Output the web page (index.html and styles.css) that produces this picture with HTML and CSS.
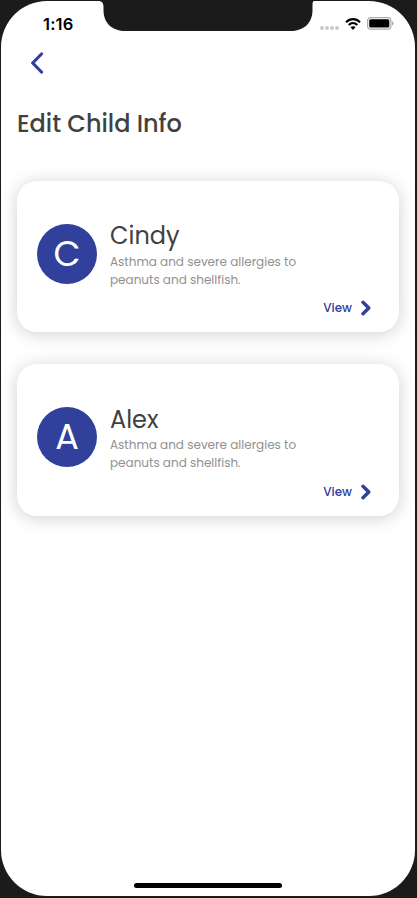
FILE: index.html
```
<!DOCTYPE html>
<html lang="en">
<head>
<meta charset="utf-8">
<title>Edit Child Info</title>
<link rel="stylesheet" href="styles.css">
</head>
<body>
<div class="screen">
  <svg class="notch" width="216" height="30" viewBox="0 0 216 30" aria-hidden="true"><path d="M0 0C4 0 5.500 2 5.500 6V9C5.500 22 14 30 28 30H192C206 30 214.500 22 214.500 9V6C214.500 2 214.500 0 216 0Z"/></svg>
  <header class="status">
    <span class="time">1:16</span>
    <div class="indicators">
      <svg class="signal" width="19" height="4" viewBox="0 0 19 4"><circle cx="2" cy="2" r="1.900"/><circle cx="7" cy="2" r="1.900"/><circle cx="12" cy="2" r="1.900"/><circle cx="17" cy="2" r="1.900"/></svg>
      <svg class="wifi" width="16" height="12" viewBox="0 0 16 12"><path class="arc" d="M1 4.200C5 .1 11 .1 15 4.200M3.700 7C6.200 4.500 9.800 4.500 12.300 7"/><path d="M5.400 9.100C7 7.800 9 7.800 10.600 9.100L8 11.900Z"/></svg>
      <svg class="battery" width="27" height="13" viewBox="0 0 27 13"><rect class="shell" x=".6" y=".6" width="23.300" height="11.600" rx="3"/><rect x="2.200" y="2.200" width="20.100" height="8.400" rx="1.500"/><path class="cap" d="M25 4.300C27 5 27 8 25 8.600Z"/></svg>
    </div>
  </header>
  <nav class="nav"><svg width="14" height="22" viewBox="0 0 14 22"><path class="stroke" d="M11.500 2L2.700 11L11.500 20"/></svg></nav>
  <main class="content">
    <h1 class="title">Edit Child Info</h1>
    <section class="card">
      <div class="child">
        <div class="avatar">C</div>
        <div class="info"><h2 class="name">Cindy</h2><p class="note">Asthma and severe allergies to<br>peanuts and shellfish.</p></div>
      </div>
      <div class="view"><span>View</span><svg width="10" height="16" viewBox="0 0 10 16"><path class="stroke bold" d="M2 2.200L7.800 8L2 13.800"/></svg></div>
    </section>
    <section class="card">
      <div class="child">
        <div class="avatar">A</div>
        <div class="info"><h2 class="name">Alex</h2><p class="note">Asthma and severe allergies to<br>peanuts and shellfish.</p></div>
      </div>
      <div class="view"><span>View</span><svg width="10" height="16" viewBox="0 0 10 16"><path class="stroke bold" d="M2 2.200L7.800 8L2 13.800"/></svg></div>
    </section>
  </main>
  <div class="home-bar"></div>
</div>
</body>
</html>
```
FILE: styles.css
```
* { box-sizing: border-box; }
body { margin: 0; padding: 1px 2px 2px 1px; height: 898px; background: #1b1b1b; font-family: Poppins, Inter, sans-serif; overflow: hidden; }
svg { display: block; flex: none; }
h1, h2, p { margin: 0; }
.screen { position: relative; width: 414px; height: 895px; background: #fff; border-radius: 46px; overflow: hidden; }
.notch { position: absolute; left: 97px; top: 0; fill: #1b1b1b; }
.status { height: 44px; padding: 13px 21px 0 42px; display: flex; justify-content: space-between; align-items: flex-start; }
.time { font: 600 16.500px/20px Inter, sans-serif; letter-spacing: .15px; color: #000; }
.indicators { display: flex; align-items: center; padding-top: 3px; }
.signal { fill: #c8c8c8; margin: 9px 6px 0 0; }
.wifi { margin-right: 6px; }
.arc { fill: none; stroke: #000; stroke-width: 2.100; }
.shell { fill: none; stroke: #aaa; stroke-width: 1.200; }
.cap { fill: #aaa; }
.stroke { fill: none; stroke: #30409b; stroke-width: 3.200; stroke-linecap: round; stroke-linejoin: round; }
.bold { stroke-width: 3.400; }
.nav { height: 48px; padding: 7px 0 0 29px; }
.content { padding: 0 16px; }
.title { margin-top: 12.700px; height: 75px; font-size: 24px; line-height: 36px; font-weight: 500; color: #414141; }
.card { height: 151.600px; margin-bottom: 31.900px; padding: 38px 28px 0 20px; display: flex; flex-direction: column; background: #fff; border-radius: 20px; box-shadow: 0 2px 18px rgba(0,0,0,.19); }
.child { display: flex; height: 80.400px; }
.avatar { width: 60px; height: 60px; margin: 5px 13px 0 0; display: flex; align-items: center; justify-content: center; flex: none; border-radius: 50%; background: #30409b; color: #fff; font-size: 35px; line-height: 60px; font-weight: 400; }
.name { padding-top: .5px; margin-bottom: -.3px; font-size: 24px; line-height: 34px; font-weight: 400; color: #414141; }
.note { font-size: 12px; line-height: 18px; color: #919191; white-space: nowrap; }
.view { display: flex; align-items: center; justify-content: flex-end; gap: 9px; height: 18px; font-size: 12px; line-height: 18px; font-weight: 500; color: #30409b; }
.home-bar { position: absolute; left: 133px; bottom: 8px; width: 148px; height: 5px; border-radius: 3px; background: #000; }
```
